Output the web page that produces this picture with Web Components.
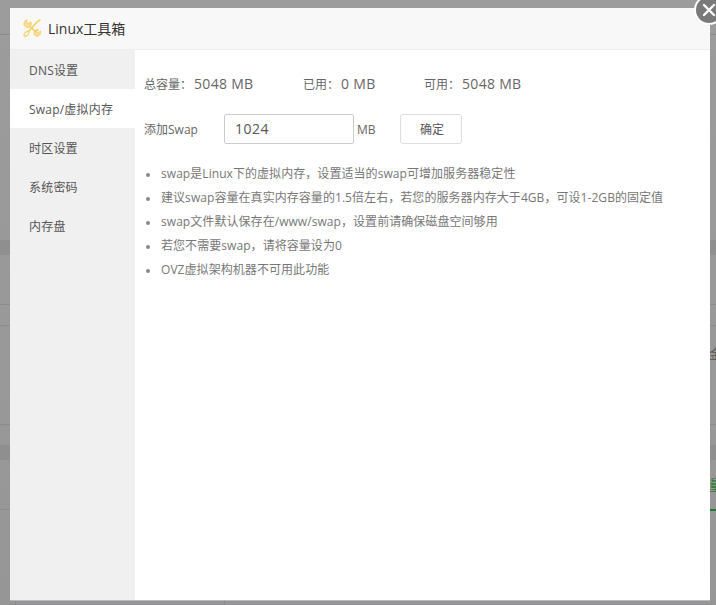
<!DOCTYPE html>
<html lang="zh"><head><meta charset="utf-8"><title>Linux工具箱</title>
<style>html,body{margin:0;padding:0;width:716px;height:605px;overflow:hidden;font-family:"Open Sans","Noto Sans CJK SC",sans-serif}</style>
</head><body>
<tool-page>
  <tool-modal heading="Linux工具箱">
    <tool-nav-item>DNS设置</tool-nav-item>
    <tool-nav-item active>Swap/虚拟内存</tool-nav-item>
    <tool-nav-item>时区设置</tool-nav-item>
    <tool-nav-item>系统密码</tool-nav-item>
    <tool-nav-item>内存盘</tool-nav-item>
    <swap-panel slot="main"></swap-panel>
  </tool-modal>
</tool-page>
<script>
const C='\uFF0C', K='\uFF1A';
customElements.define('tool-page', class extends HTMLElement{
  constructor(){super();this.attachShadow({mode:'open'}).innerHTML=`<style>
  :host{display:block;position:relative;width:716px;height:605px;box-sizing:border-box;padding:8px 6px 5px 10px;overflow:hidden;
    background:
     linear-gradient(#8f8f8f,#8f8f8f) 0 240px/100% 15px no-repeat,
     linear-gradient(#8f8f8f,#8f8f8f) 0 445px/100% 15px no-repeat,
     linear-gradient(#8c8c8c,#8c8c8c) 0 304px/100% 1px no-repeat,
     linear-gradient(#8c8c8c,#8c8c8c) 0 325px/100% 1px no-repeat,
     linear-gradient(#8c8c8c,#8c8c8c) 0 424px/100% 1px no-repeat,
     linear-gradient(#8c8c8c,#8c8c8c) 0 509px/100% 1px no-repeat,
     linear-gradient(#8c8c8c,#8c8c8c) 0 34px/100% 1px no-repeat,
     linear-gradient(#8a8a8a,#8a8a8a) 15px 600px/1px 5px no-repeat,
     linear-gradient(#8a8a8a,#8a8a8a) 224px 600px/1px 5px no-repeat,
     linear-gradient(#9c9c9c,#969696);}
  .g{position:absolute;left:709px;font:14px/16px "Open Sans","Noto Sans CJK SC",sans-serif;white-space:nowrap;color:#5e5e5e}
  .green{position:absolute;left:710px;top:509px;width:6px;height:2px;background:#1d7a32}
  </style>
  <span class="g" style="top:346px">金</span>
  <span class="g" style="top:477px;color:#2a7a3c">量</span>
  <div class="green"></div>
  <slot></slot>`;}
});
customElements.define('tool-modal', class extends HTMLElement{
  constructor(){super();this.attachShadow({mode:'open'}).innerHTML=`<style>
  :host{display:grid;grid-template-rows:42px 1fr;width:700px;height:592px;background:#fff;position:relative;box-shadow:0 1px 0 #b9b7bf}
  header{display:flex;align-items:center;gap:6px;padding:0 0 2px 12px;background:#f8f8f8;border-bottom:1px solid #eee;font-size:14px;color:#333;box-sizing:border-box}
  header svg{flex:none;display:block}
  .body{display:grid;grid-template-columns:125px 1fr;min-height:0}
  nav{background:#f0f0f0;display:flex;flex-direction:column}
  main{padding:0 9px;min-width:0}
  .close{position:absolute;left:684px;top:-13px;width:30px;height:30px;box-sizing:border-box;border-radius:50%;background:#7a7a7a;border:2px solid #fff;display:grid;place-items:center}
  </style>
  <header><svg width="20" height="20" viewBox="0 0 20 20" fill="none" stroke="#f7cf5c" stroke-linecap="round" stroke-linejoin="round">
    <path d="M8 8.6 L13.6 13.8" stroke-width="1.5"/>
    <path d="M4.6 2 A4 4 0 0 0 2.4 7.8 A4 4 0 0 0 8 8.6 A4 4 0 0 0 8.8 4 L6.2 5.8 L4.8 4.6 Z" fill="#f7cf5c" fill-opacity=".55" stroke-width="1"/>
    <path d="M15.8 18 A4 4 0 0 0 18.6 13 L16.4 15 L14.8 13.8 L16.2 11.4 A4 4 0 0 0 12.4 17 A4 4 0 0 0 15.8 18 Z" fill="#f7cf5c" fill-opacity=".55" stroke-width="1"/>
    <path d="M18 2 L15.6 3.4 L6.6 13.2" stroke-width="1.5"/>
    <path d="M6.6 13.2 L3.4 14.2 L1.8 17 L3.2 18.4 L6 17 L7.2 14 Z" stroke-width="1.1"/>
  </svg><span>${this.getAttribute('heading')}</span></header>
  <div class="body"><nav><slot></slot></nav><main><slot name="main"></slot></main></div>
  <div class="close"><svg width="14" height="14" viewBox="0 0 14 14"><path d="M2 2 L12 12 M12 2 L2 12" stroke="#fff" stroke-width="2.4" stroke-linecap="round"/></svg></div>`;}
});
customElements.define('tool-nav-item', class extends HTMLElement{
  constructor(){super();this.attachShadow({mode:'open'}).innerHTML=`<style>
  :host{display:block;height:39px;line-height:41px;padding-left:19px;font-size:12px;letter-spacing:.2px;color:#555;white-space:nowrap}
  :host([active]){background:#fff}
  </style><slot></slot>`;}
});
customElements.define('swap-stat', class extends HTMLElement{
  constructor(){super();this.attachShadow({mode:'open'}).innerHTML=`<style>
  :host{display:inline-flex;align-items:baseline;white-space:nowrap}
  .l{font-size:12px;color:#666}
  .v{font-size:14px;letter-spacing:.3px;color:#666;margin-left:2px}
  </style><span class="l">${this.getAttribute('label')}</span><span class="v"><slot></slot></span>`;}
});
customElements.define('swap-panel', class extends HTMLElement{
  constructor(){super();this.attachShadow({mode:'open'}).innerHTML=`<style>
  :host{display:block;color:#666;font-size:12px}
  .stats{display:flex;padding-top:25px;height:18px;line-height:18px;align-items:baseline}
  .s1{width:159px}.s2{width:121px}
  .form{display:flex;align-items:center;margin-top:21px;height:30px}
  .lab{width:80px}
  .inp{box-sizing:border-box;width:130px;height:30px;border:1px solid #ccc;border-radius:2px;padding-left:10px;font:14px/28px "Open Sans",sans-serif;letter-spacing:.5px;color:#555}
  .unit{margin-left:3px;width:43px}
  button{box-sizing:border-box;width:62px;height:30px;background:#fff;border:1px solid #ddd;border-radius:3px;color:#555;font:12px "Open Sans","Noto Sans CJK SC",sans-serif;padding:0 0 0 2px}
  ul{margin:18px 0 0;padding:0 0 0 17px;list-style:none;letter-spacing:.06px}
  li{line-height:24px;height:24px;white-space:nowrap;color:#777;position:relative}
  li::before{content:"";position:absolute;left:-15px;top:11px;width:4px;height:4px;border-radius:50%;background:#888}
  </style>
  <div class="stats"><swap-stat class="s1" label="总容量${K}">5048 MB</swap-stat><swap-stat class="s2" label="已用${K}">0 MB</swap-stat><swap-stat label="可用${K}">5048 MB</swap-stat></div>
  <div class="form"><span class="lab">添加Swap</span><div class="inp">1024</div><span class="unit">MB</span><button>确定</button></div>
  <ul>
   <li>swap是Linux下的虚拟内存${C}设置适当的swap可增加服务器稳定性</li>
   <li>建议swap容量在真实内存容量的1.5倍左右${C}若您的服务器内存大于4GB${C}可设1-2GB的固定值</li>
   <li>swap文件默认保存在/www/swap${C}设置前请确保磁盘空间够用</li>
   <li>若您不需要swap${C}请将容量设为0</li>
   <li>OVZ虚拟架构机器不可用此功能</li>
  </ul>`;}
});
</script>
</body></html>
